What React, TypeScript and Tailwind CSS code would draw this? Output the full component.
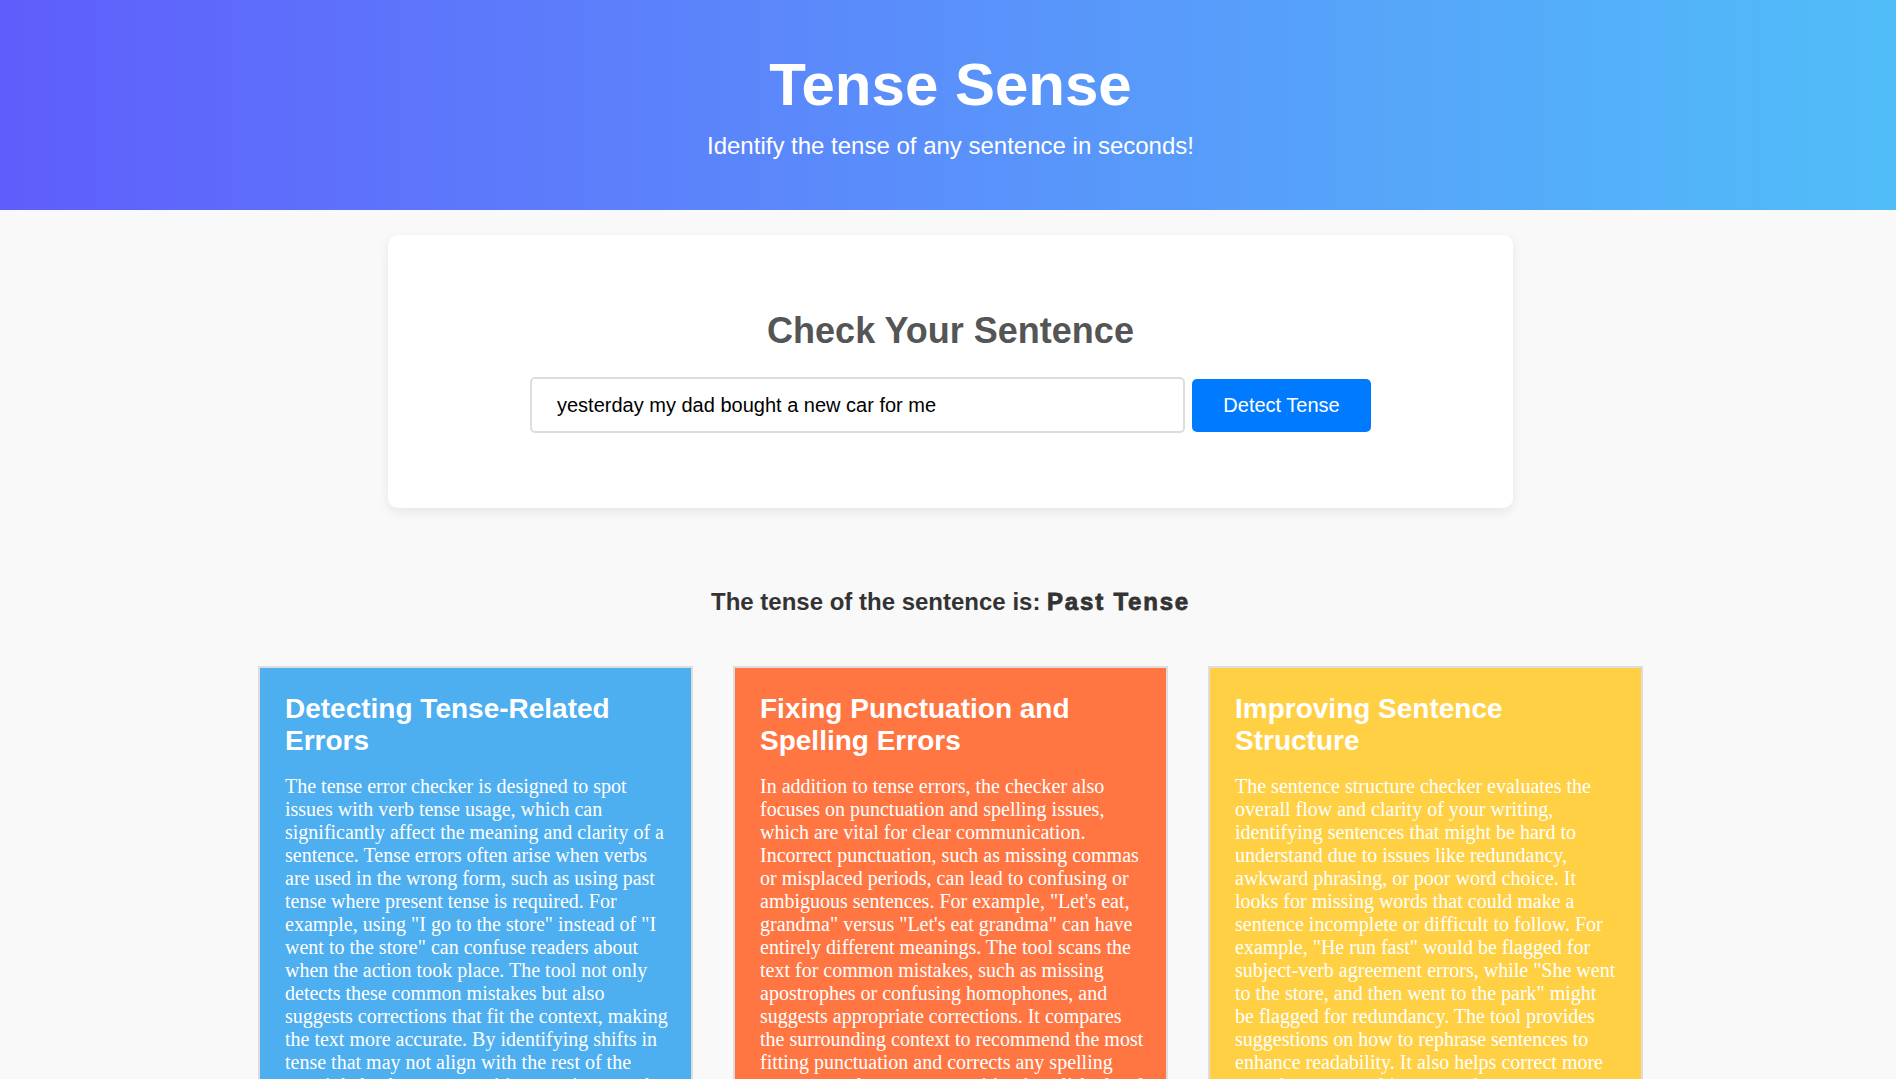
import React, { useState } from 'react';

const features = [
  {
    title: 'Detecting Tense-Related Errors',
    color: 'bg-[#4daef0]',
    text: 'The tense error checker is designed to spot issues with verb tense usage, which can significantly affect the meaning and clarity of a sentence. Tense errors often arise when verbs are used in the wrong form, such as using past tense where present tense is required. For example, using "I go to the store" instead of "I went to the store" can confuse readers about when the action took place. The tool not only detects these common mistakes but also suggests corrections that fit the context, making the text more accurate. By identifying shifts in tense that may not align with the rest of the text, it helps keep your writing consistent and easy to follow.',
  },
  {
    title: 'Fixing Punctuation and Spelling Errors',
    color: 'bg-[#ff7643]',
    text: 'In addition to tense errors, the checker also focuses on punctuation and spelling issues, which are vital for clear communication. Incorrect punctuation, such as missing commas or misplaced periods, can lead to confusing or ambiguous sentences. For example, "Let\'s eat, grandma" versus "Let\'s eat grandma" can have entirely different meanings. The tool scans the text for common mistakes, such as missing apostrophes or confusing homophones, and suggests appropriate corrections. It compares the surrounding context to recommend the most fitting punctuation and corrects any spelling errors to make sure your writing is polished and professional.',
  },
  {
    title: 'Improving Sentence Structure',
    color: 'bg-[#ffd044]',
    text: 'The sentence structure checker evaluates the overall flow and clarity of your writing, identifying sentences that might be hard to understand due to issues like redundancy, awkward phrasing, or poor word choice. It looks for missing words that could make a sentence incomplete or difficult to follow. For example, "He run fast" would be flagged for subject-verb agreement errors, while "She went to the store, and then went to the park" might be flagged for redundancy. The tool provides suggestions on how to rephrase sentences to enhance readability. It also helps correct more complex structural issues, such as run-on sentences and fragments.',
  },
];

export default function App() {
  const [sentence, setSentence] = useState('yesterday my dad bought a new car for me');

  return (
    <div className="min-h-screen bg-[#f9f9f9] leading-[normal] font-['Liberation_Sans',Arial,sans-serif]">
      <header className="flex flex-col items-center pl-[5px] py-[50px] bg-gradient-to-r from-[#5f5dfb] to-[#50bdf8] text-white">
        <h1 className="text-[60px] font-bold leading-[normal] mb-[13px]">Tense Sense</h1>
        <p className="text-[24px] leading-[normal]">Identify the tense of any sentence in seconds!</p>
      </header>

      <div className="flex justify-center pl-[5px] mt-[25px]">
        <div className="w-[1125px] bg-white rounded-[10px] shadow-[0_4px_12px_rgba(0,0,0,0.08)] py-[75px] flex flex-col items-center gap-[25px]">
          <h2 className="text-[36px] font-bold leading-[normal] text-[#555]">Check Your Sentence</h2>
          <div className="flex items-center gap-[7px]">
            <input
              value={sentence}
              onChange={(e) => setSentence(e.target.value)}
              className="w-[655px] h-[56px] border-2 border-[#ddd] rounded-[5px] pl-[25px] text-[20px] leading-[normal] text-black outline-none"
            />
            <button className="w-[179px] h-[53px] bg-[#007bff] rounded-[5px] text-white text-[20px] leading-[normal]">
              Detect Tense
            </button>
          </div>
        </div>
      </div>

      <p className="text-center pl-[5px] mt-[80px] text-[24px] font-bold leading-[normal] text-[#333]">
        The tense of the sentence is:{' '}
        <strong className="font-black tracking-[1.8px] [-webkit-text-stroke:0.8px_#333]">Past Tense</strong>
      </p>

      <div className="flex justify-center pl-[5px] mt-[50px] pb-[40px]">
        <div className="grid grid-cols-3 gap-[40px]">
          {features.map((f) => (
            <div
              key={f.title}
              className={`w-[435px] border-2 border-[#ddd] ${f.color} text-white pt-[25px] pl-[25px] pr-[22px] pb-[25px]`}
            >
              <h3 className="text-[28px] font-bold leading-[normal] mb-[18px]">{f.title}</h3>
              <p className="text-[20px] leading-[normal] font-['Liberation_Serif','Times_New_Roman',serif]">{f.text}</p>
            </div>
          ))}
        </div>
      </div>
    </div>
  );
}
